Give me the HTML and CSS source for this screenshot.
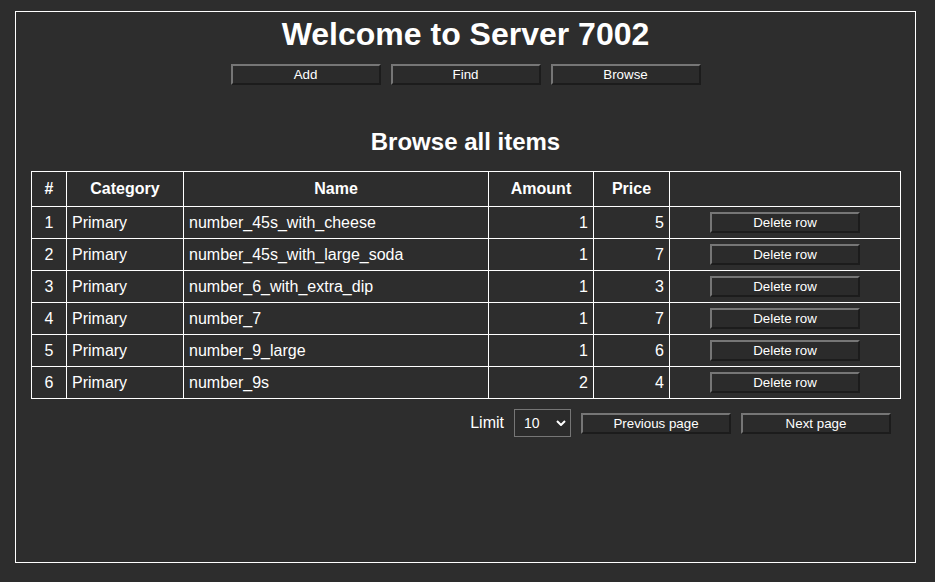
FILE: index.html
```html
<!DOCTYPE html>
<html lang="en">
<head>
<meta charset="utf-8">
<title>Server 7002</title>
<link rel="stylesheet" href="styles.css">
</head>
<body>
<div class="frame">
  <h1 class="title">Welcome to Server 7002</h1>
  <nav class="nav">
    <button class="btn">Add</button>
    <button class="btn">Find</button>
    <button class="btn">Browse</button>
  </nav>
  <h2 class="subtitle">Browse all items</h2>
  <table class="items">
    <colgroup>
      <col class="c-num"><col class="c-cat"><col class="c-name"><col class="c-amt"><col class="c-price"><col class="c-act">
    </colgroup>
    <thead>
      <tr><th>#</th><th>Category</th><th>Name</th><th>Amount</th><th>Price</th><th></th></tr>
    </thead>
    <tbody>
      <tr><td class="num">1</td><td>Primary</td><td>number_45s_with_cheese</td><td class="r">1</td><td class="r">5</td><td><button class="btn btn-row">Delete row</button></td></tr>
      <tr><td class="num">2</td><td>Primary</td><td>number_45s_with_large_soda</td><td class="r">1</td><td class="r">7</td><td><button class="btn btn-row">Delete row</button></td></tr>
      <tr><td class="num">3</td><td>Primary</td><td>number_6_with_extra_dip</td><td class="r">1</td><td class="r">3</td><td><button class="btn btn-row">Delete row</button></td></tr>
      <tr><td class="num">4</td><td>Primary</td><td>number_7</td><td class="r">1</td><td class="r">7</td><td><button class="btn btn-row">Delete row</button></td></tr>
      <tr><td class="num">5</td><td>Primary</td><td>number_9_large</td><td class="r">1</td><td class="r">6</td><td><button class="btn btn-row">Delete row</button></td></tr>
      <tr><td class="num">6</td><td>Primary</td><td>number_9s</td><td class="r">2</td><td class="r">4</td><td><button class="btn btn-row">Delete row</button></td></tr>
    </tbody>
  </table>
  <div class="pager">
    <span class="pager-label">Limit</span>
    <div class="select-wrap">
      <select class="select">
        <option>10</option>
        <option>20</option>
        <option>50</option>
      </select>
      <svg class="chev" width="10" height="6" viewBox="0 0 10 6"><path d="M1 1 L5 5 L9 1" fill="none" stroke="#fff" stroke-width="2"/></svg>
    </div>
    <button class="btn">Previous page</button>
    <button class="btn">Next page</button>
  </div>
</div>
</body>
</html>
```

FILE: styles.css
```css
html, body {
  margin: 0;
  padding: 0;
  background: #2d2d2d;
  color: #fff;
  font-family: "Liberation Sans", Arial, sans-serif;
}

body {
  padding: 11px 19px 0 15px;
}

.frame {
  border: 1px solid #fff;
  box-sizing: border-box;
  height: 552px;
}

.title {
  margin: 4px 0 0;
  font-size: 32px;
  line-height: 37px;
  font-weight: bold;
  text-align: center;
}

.nav {
  display: flex;
  justify-content: center;
  gap: 10px;
  margin-top: 11px;
}

.btn {
  box-sizing: border-box;
  width: 150px;
  height: 21px;
  padding: 0;
  margin: 0;
  background: #2b2b2b;
  color: #fff;
  font-family: "Liberation Sans", Arial, sans-serif;
  font-size: 13.33px;
  line-height: 17px;
  border-width: 2px;
  border-style: solid;
  border-color: #767676 #1c1c1c #1c1c1c #767676;
}

.subtitle {
  margin: 43px 0 0;
  font-size: 24px;
  line-height: 28px;
  font-weight: bold;
  text-align: center;
}

.items {
  margin: 15px 0 0 15px;
  width: 869px;
  table-layout: fixed;
  border-collapse: collapse;
  font-size: 16px;
  line-height: 18px;
}

.c-num { width: 35px; }
.c-cat { width: 117px; }
.c-name { width: 305px; }
.c-amt { width: 105px; }
.c-price { width: 76px; }
.c-act { width: 231px; }

.items th,
.items td {
  border: 1px solid #fff;
  padding: 5px;
  text-align: left;
  vertical-align: middle;
  white-space: nowrap;
}

.items th {
  padding: 8px 5px;
  text-align: center;
  font-weight: bold;
}

.items td.num { text-align: center; }
.items td.r { text-align: right; }

.btn-row {
  display: block;
  margin: 0 auto;
}

.pager {
  width: 870px;
  margin: 10px 0 0 15px;
  box-sizing: border-box;
  padding-right: 10px;
  display: flex;
  justify-content: flex-end;
  align-items: center;
  gap: 10px;
}

.pager-label {
  font-size: 16px;
}

.select-wrap {
  position: relative;
  width: 57px;
  height: 28px;
}

.select {
  appearance: none;
  -webkit-appearance: none;
  box-sizing: border-box;
  width: 57px;
  height: 28px;
  margin: 0;
  padding: 0 0 0 9px;
  border: 1px solid #767676;
  border-radius: 0;
  background: #2b2b2b;
  color: #fff;
  font-family: "Liberation Sans", Arial, sans-serif;
  font-size: 14px;
}

.chev {
  position: absolute;
  left: 42px;
  top: 11px;
  pointer-events: none;
}
```
